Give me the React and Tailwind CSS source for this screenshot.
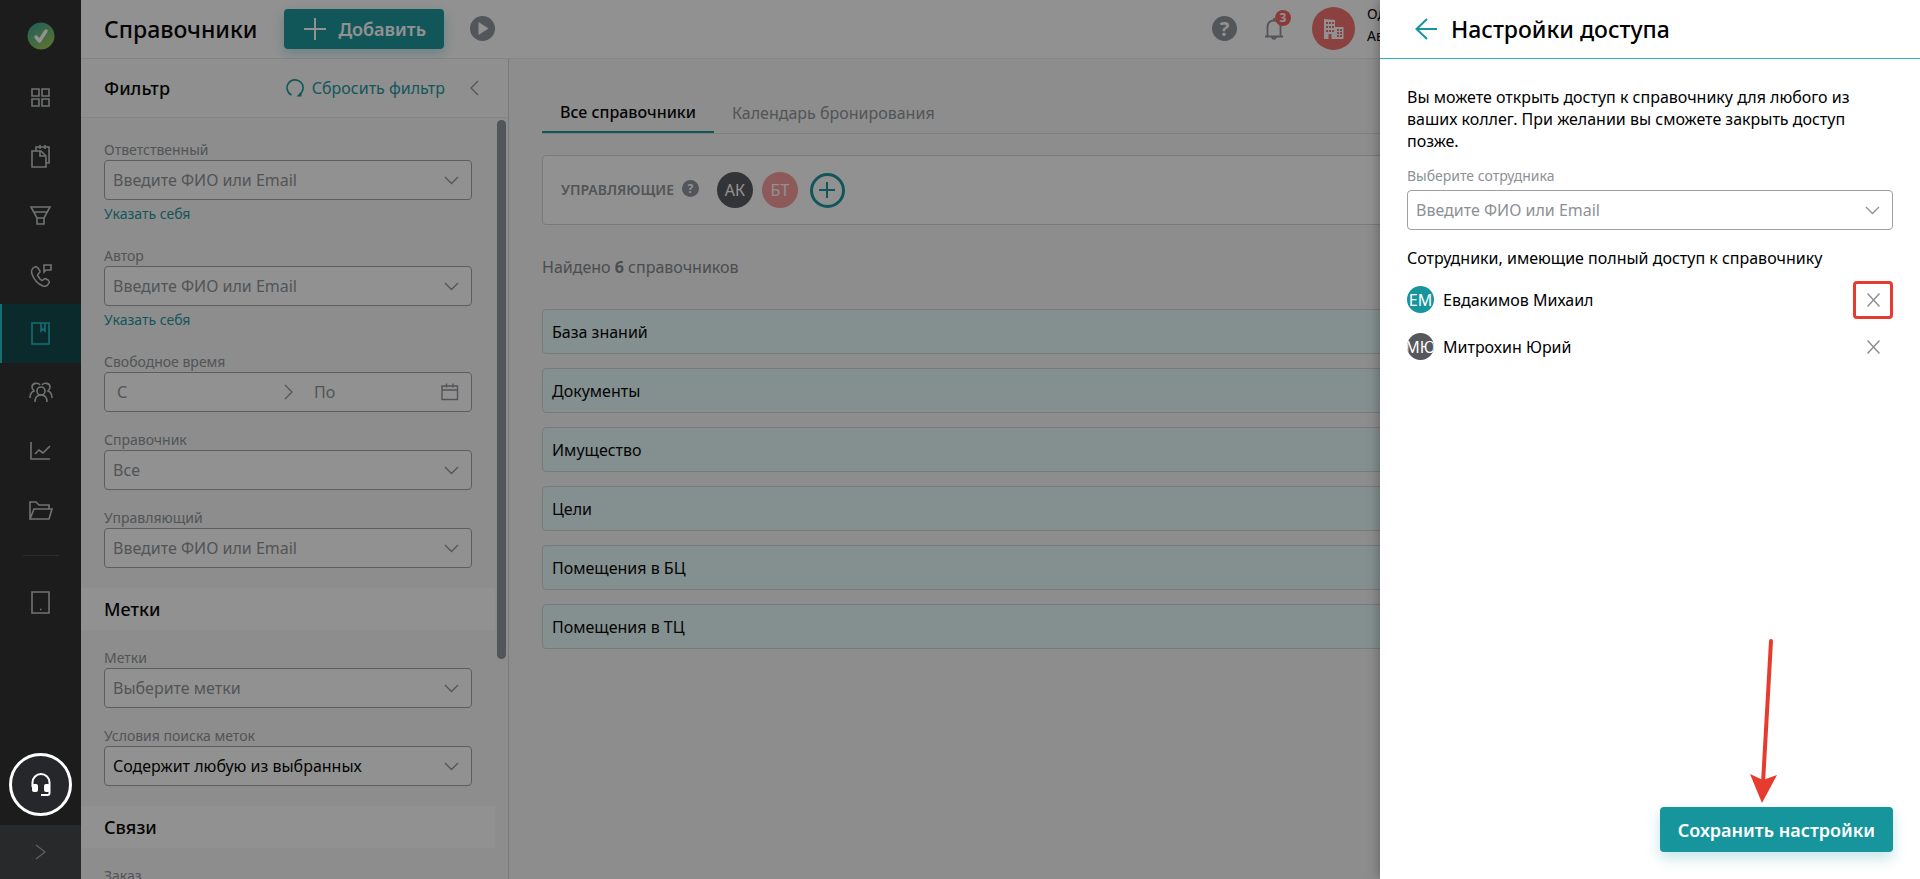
import { useState } from "react";

const navItems = ["grid", "docs", "funnel", "phone", "book", "people", "chart", "folder"];

const directories = [
  "База знаний",
  "Документы",
  "Имущество",
  "Цели",
  "Помещения в БЦ",
  "Помещения в ТЦ",
];

const navPaths = {
  grid: <path d="M3 3h7v7H3zM13 3h7v7h-7zM3 13h7v7H3zM13 13h7v7h-7z" />,
  docs: (
    <>
      <path d="M3 6h9l5 5v11H3z" />
      <path d="M11 6v5h5" />
      <path d="M7 6V2h13v16h-3M11 0v4M16 0v4" />
    </>
  ),
  funnel: <path d="M2 3h19l-6 11H8zM5 8h13M8 14h7v6H8z" />,
  phone: (
    <>
      <path d="M6 4c-3 1-4 4-3 7 2 6 6 10 11 12 3 1 5-1 6-3 1-1 0-2-1-3l-2-1c-1-1-2 0-3 1s-2 0-3-1l-2-3c-1-1 0-2 1-3 1 0 1-1 1-2L9 5c-1-1-2-2-3-1z" />
      <path d="M15 9V2h7v5h-5z" />
    </>
  ),
  book: <path d="M3 1h17v21H3zM12 1v8l2-2 2 2V1" />,
  people: (
    <>
      <circle cx="12" cy="10" r="4" />
      <path d="M6 21c0-4 2-7 6-7s6 3 6 7" />
      <path d="M11 4C9 1 3 2 3 6c0 2 1 3 2 4-3 1-4 4-4 7M13 4c2-3 8-2 8 2 0 2-1 3-2 4 3 1 4 4 4 7" />
    </>
  ),
  chart: <path d="M2 2v17h19M6 14l4-4 4 3 7-7" />,
  folder: <path d="M1 20V3h6l3 3h10v4M1 20l4-10h18l-3 10z" />,
  tablet: <path d="M3 1h17v21H3zM11 18.5h1.5" />,
};

const NavIcon = ({ name }) => (
  <svg
    className="w-6 h-6"
    viewBox="0 0 24 24"
    fill="none"
    stroke="currentColor"
    strokeWidth="1.6"
    aria-hidden="true"
  >
    {navPaths[name]}
  </svg>
);

const Chevron = ({ className, d = "M1 1l6.5 6.5L14 1", w = 15, h = 9 }) => (
  <svg
    className={className}
    width={w}
    height={h}
    viewBox={`0 0 ${w} ${h}`}
    fill="none"
    stroke="currentColor"
    strokeWidth="1.3"
    aria-hidden="true"
  >
    <path d={d} />
  </svg>
);

const HelpIcon = ({ className }) => (
  <span
    className={`rounded-full bg-[#8c9299] text-white font-bold flex items-center justify-center shrink-0 ${className}`}
  >
    ?
  </span>
);

const Field = ({ id, label, placeholder, options, muted, link, spaced }) => (
  <div className="flex flex-col items-stretch">
    <label htmlFor={id} className="text-sm leading-5 text-[#8c9196]">
      {label}
    </label>
    <div className={`relative flex ${spaced ? "mt-1" : ""}`}>
      {options ? (
        <select
          id={id}
          className={`appearance-none flex-1 min-w-0 h-10 px-2 text-base bg-white border border-[#a0a0a2] rounded outline-none ${
            muted ? "text-[#8c9196]" : "text-black"
          }`}
        >
          {options.map((o) => (
            <option key={o}>{o}</option>
          ))}
        </select>
      ) : (
        <input
          id={id}
          type="text"
          placeholder={placeholder}
          className="flex-1 min-w-0 h-10 px-2 text-base bg-white border border-[#a0a0a2] rounded outline-none placeholder:text-[#8c9196]"
        />
      )}
      <Chevron className="absolute right-[13px] top-4 pointer-events-none text-[#8c9196]" />
    </div>
    {link && (
      <a href="#self" className="text-sm leading-7 text-[#17959c]">
        {link}
      </a>
    )}
  </div>
);

const Sidebar = () => (
  <nav className="w-[81px] shrink-0 bg-[#282a28] flex flex-col items-stretch text-[#c4c6c8]">
    <a href="#home" aria-label="Главная" className="h-[68px] pt-1 flex justify-center items-center">
      <svg width="28" height="28" viewBox="0 0 28 28" aria-hidden="true">
        <defs>
          <linearGradient id="logo" x1="0.2" y1="0" x2="0.8" y2="1">
            <stop offset="0" stopColor="#34a69a" />
            <stop offset="1" stopColor="#a4c84c" />
          </linearGradient>
        </defs>
        <circle cx="14" cy="14" r="13.5" fill="url(#logo)" />
        <path
          d="M9 15l3.500 4L19 9"
          fill="none"
          stroke="#fff"
          strokeWidth="3.5"
          strokeLinecap="round"
          strokeLinejoin="round"
        />
      </svg>
    </a>
    {navItems.map((name) => (
      <a
        key={name}
        href={`#${name}`}
        aria-label={name}
        className={`h-[59px] flex items-center justify-center ${
          name === "book"
            ? "bg-[#0a4446] text-[#1fc0c8] border-l-2 border-[#1fc0c8] pr-[2px]"
            : ""
        }`}
      >
        <NavIcon name={name} />
      </a>
    ))}
    <hr className="w-9 mt-[15px] mx-auto border-[#474949]" />
    <a
      href="#tablet"
      aria-label="tablet"
      className="h-[59px] mt-[17px] flex items-center justify-center"
    >
      <NavIcon name="tablet" />
    </a>
    <button
      type="button"
      aria-label="Развернуть меню"
      className="h-[54px] mt-auto bg-[#414346] text-[#a0a4a8] flex items-center justify-center"
    >
      <Chevron d="M1 1l9 7-9 7" w={11} h={16} />
    </button>
  </nav>
);

const Header = () => (
  <header className="h-[59px] shrink-0 bg-white border-b border-[#e6e8e8] flex items-center pl-[23px] pb-px">
    <h1 className="text-[23px] font-medium leading-8">Справочники</h1>
    <button
      type="button"
      className="ml-[27px] h-10 pl-5 pr-[18px] flex items-center gap-3 rounded bg-[#17959c] text-white text-lg font-semibold shadow-[0_4px_12px_rgba(23,149,156,0.3)]"
    >
      <svg width="22" height="22" viewBox="0 0 22 22" stroke="#fff" strokeWidth="2" aria-hidden="true">
        <path d="M11 0v22M0 11h22" />
      </svg>
      Добавить
    </button>
    <button type="button" aria-label="Видео" className="ml-[26px]">
      <svg width="25" height="25" viewBox="0 0 25 25" aria-hidden="true">
        <circle cx="12.5" cy="12.5" r="12.5" fill="#8c9299" />
        <path d="M8.500 6v13l10-6.500z" fill="#fff" />
      </svg>
    </button>
    <div className="ml-auto flex items-center">
      <HelpIcon className="w-[25px] h-[25px] text-xl" />
      <button type="button" aria-label="Уведомления" className="relative ml-7 text-[#8c9196]">
        <svg
          width="18"
          height="22"
          viewBox="0 0 18 22"
          fill="none"
          stroke="currentColor"
          strokeWidth="1.8"
          aria-hidden="true"
        >
          <path d="M0 18.500h18M2.500 18.500V9c0-4 2.500-6.500 6.500-6.500s6.500 2.500 6.500 6.500v9.500M9 0v2.500M7 18.500c0 3 4 3 4 0" />
        </svg>
        <span className="absolute -top-2 left-[10px] w-4 h-4 rounded-full bg-[#f5625f] text-white text-xs font-bold leading-4">
          3
        </span>
      </button>
      <span className="ml-[29px] w-[43px] h-[43px] rounded-full bg-[#f26d6b] flex items-center justify-center">
        <svg width="20" height="20" viewBox="0 0 20 20" aria-hidden="true">
          <path
            fill="#fff"
            fillRule="evenodd"
            d="M0 0l11 1v7h8.500v12H7.500v-5h-3v5H0zM2 3v2h2V3zM5 3v2h2V3zM8 3v2h2V3zM2 7v2h2V7zM5 7v2h2V7zM8 7v2h2V7zM2 11v2h2v-2zM5 11v2h2v-2zM8 11v2h2v-2zM13 10v2h2v-2zM16 10v2h2v-2zM13 13v2h2v-2zM16 13v2h2v-2zM13 16v2h2v-2zM16 16v2h2v-2z"
          />
        </svg>
      </span>
      <div className="w-[553px] ml-3 pb-2 text-sm leading-[22px]">
        <div>Од</div>
        <div>Ав</div>
      </div>
    </div>
  </header>
);

const SectionTitle = ({ children }) => (
  <h3 className="h-[42px] pl-[23px] flex items-center bg-white text-lg font-medium">{children}</h3>
);

const FilterPanel = () => (
  <aside className="w-[428px] shrink-0 border-r border-[#d4d6d6] flex flex-col min-h-0">
    <div className="h-[59px] shrink-0 border-b border-[#e6e8e8] bg-[#fbfbfb] flex items-center pl-[23px] pr-[29px] pb-px">
      <h2 className="text-lg font-medium">Фильтр</h2>
      <button type="button" className="ml-auto flex items-center gap-2 text-base text-[#17959c]">
        <svg
          width="18"
          height="18"
          viewBox="0 0 18 18"
          fill="none"
          stroke="currentColor"
          strokeWidth="1.6"
          aria-hidden="true"
        >
          <path d="M5.500 16A8 8 0 1 1 13.500 15.500" />
          <path d="M10.500 17.500h5v-5z" fill="currentColor" stroke="none" />
        </svg>
        Сбросить фильтр
      </button>
      <button type="button" aria-label="Свернуть фильтр" className="ml-[25px] text-[#8c9196]">
        <Chevron d="M8 1L1 8l7 7" w={9} h={16} />
      </button>
    </div>

    <div className="flex flex-1 min-h-0">
      <div className="flex-1 min-h-0 overflow-hidden">
        <div className="px-[23px] pt-[22px] pb-5 flex flex-col gap-[18px]">
          <Field id="responsible" label="Ответственный" placeholder="Введите ФИО или Email" link="Указать себя" />
          <Field id="author" label="Автор" placeholder="Введите ФИО или Email" link="Указать себя" />

          {/* Date range */}
          <div>
            <label htmlFor="from" className="block text-sm leading-5 text-[#8c9196]">
              Свободное время
            </label>
            <div className="h-10 flex items-center border border-[#a0a0a2] rounded bg-white text-[#8c9196] px-3">
              <input id="from" placeholder="С" className="w-[167px] outline-none placeholder:text-[#8c9196]" />
              <Chevron d="M1 1l7 7-7 7" w={9} h={16} />
              <input
                aria-label="По"
                placeholder="По"
                className="flex-1 min-w-0 ml-[21px] outline-none placeholder:text-[#8c9196]"
              />
              <svg
                width="18"
                height="18"
                viewBox="0 0 18 18"
                fill="none"
                stroke="currentColor"
                strokeWidth="1.4"
                aria-hidden="true"
              >
                <path d="M1 3h15.500v13.500H1zM1 7h15.500M5.500 0.500v4M12 0.500v4" />
              </svg>
            </div>
          </div>

          <Field id="directory" label="Справочник" options={["Все"]} muted />
          <Field id="manager" label="Управляющий" placeholder="Введите ФИО или Email" />
        </div>

        <SectionTitle>Метки</SectionTitle>
        <div className="px-[23px] pt-[18px] pb-5 flex flex-col gap-[18px]">
          <Field id="tags" label="Метки" placeholder="Выберите метки" />
          <Field id="tagsMode" label="Условия поиска меток" options={["Содержит любую из выбранных"]} />
        </div>

        <SectionTitle>Связи</SectionTitle>
        <div className="px-[23px] py-[18px]">
          <Field id="order" label="Заказ" />
        </div>
      </div>

      {/* Scroll bar */}
      <div className="w-[13px] shrink-0 pt-0.5 pl-0.5">
        <div className="w-[9px] h-[71%] rounded-full bg-[#8c9299]" />
      </div>
    </div>
  </aside>
);

const Content = () => (
  <main className="flex-1 min-w-0 px-[33px] pt-[34px]">
    <div className="flex border-b border-[#dcdede]">
      <button
        type="button"
        className="h-10 px-[18px] -mb-px border-b-2 border-[#17959c] text-base font-medium"
      >
        Все справочники
      </button>
      <button type="button" className="h-10 px-[18px] text-base text-[#8c9196]">
        Календарь бронирования
      </button>
    </div>

    <div className="mt-[21px] h-[70px] px-[18px] flex items-center bg-white border border-[#d4d6d6] rounded">
      <span className="text-sm font-semibold text-[#8c9196]">УПРАВЛЯЮЩИЕ</span>
      <HelpIcon className="w-[17px] h-[17px] ml-2 mb-[3px] text-xs" />
      <span className="ml-[18px] w-9 h-9 rounded-full bg-[#55575b] text-white flex items-center justify-center">
        АК
      </span>
      <span className="ml-[9px] w-9 h-9 rounded-full bg-[#f79c9a] text-white flex items-center justify-center">
        БТ
      </span>
      <button
        type="button"
        aria-label="Добавить управляющего"
        className="ml-3 w-[35px] h-[35px] rounded-full border-[3px] border-[#17959c] text-[#17959c] flex items-center justify-center"
      >
        <svg width="16" height="16" viewBox="0 0 16 16" stroke="currentColor" strokeWidth="2" aria-hidden="true">
          <path d="M8 0v16M0 8h16" />
        </svg>
      </button>
    </div>

    <p className="mt-[30px] leading-6 text-[#7f8489]">
      Найдено <b className="font-bold">6</b> справочников
    </p>

    <ul className="mt-[30px] flex flex-col gap-[14px]">
      {directories.map((name) => (
        <li key={name} className="h-[45px] px-[9px] flex items-center bg-[#e8fbfb] border border-[#d4d6d6] rounded">
          {name}
        </li>
      ))}
    </ul>
  </main>
);

const Person = ({ initials, name, color, marked, onRemove }) => (
  <li className="h-[47px] flex items-center">
    <span
      className={`w-[27px] h-[27px] rounded-full overflow-hidden flex items-center justify-center shrink-0 text-base text-white ${color}`}
    >
      {initials}
    </span>
    <span className="ml-[9px] flex-1">{name}</span>
    <button
      type="button"
      aria-label={`Закрыть доступ: ${name}`}
      onClick={onRemove}
      className={`w-10 h-[38px] flex items-center justify-center rounded border-[3px] text-[#8c8e90] ${
        marked ? "border-[#e63b2e]" : "border-transparent"
      }`}
    >
      <svg width="13" height="14" viewBox="0 0 13 14" stroke="currentColor" strokeWidth="1.5" aria-hidden="true">
        <path d="M0.500 0.500l12 13M12.500 0.500l-12 13" />
      </svg>
    </button>
  </li>
);

const AccessDrawer = () => {
  const [people, setPeople] = useState([
    { initials: "ЕМ", name: "Евдакимов Михаил", color: "bg-[#17959c]", marked: true },
    { initials: "МЮ", name: "Митрохин Юрий", color: "bg-[#55575b]" },
  ]);

  const removePerson = (name) => {
    setPeople(people.filter((p) => p.name !== name));
  };

  return (
    <section className="absolute top-0 right-0 bottom-0 z-30 w-[540px] bg-white flex flex-col shadow-[0_0_12px_rgba(0,0,0,0.35)]">
      <div className="h-[59px] shrink-0 border-b border-[#1fb8bf] flex items-center pl-[35px] pb-px">
        <button type="button" aria-label="Назад" className="text-[#17959c]">
          <svg
            width="22"
            height="22"
            viewBox="0 0 22 22"
            fill="none"
            stroke="currentColor"
            strokeWidth="2"
            aria-hidden="true"
          >
            <path d="M22 11H1.500M12 1L1.500 11 12 21" />
          </svg>
        </button>
        <h2 className="ml-[14px] text-[23px] font-medium leading-8">Настройки доступа</h2>
      </div>

      <div className="px-[27px] pt-[27px] flex-1">
        <p className="leading-[22px] mb-[14px]">
          Вы можете открыть доступ к справочнику для любого из ваших коллег. При желании вы сможете
          закрыть доступ позже.
        </p>
        <Field id="employee" label="Выберите сотрудника" placeholder="Введите ФИО или Email" spaced />
        <p className="mt-4 leading-6">Сотрудники, имеющие полный доступ к справочнику</p>
        <ul className="mt-[6px]">
          {people.map((p) => (
            <Person key={p.name} {...p} onRemove={() => removePerson(p.name)} />
          ))}
        </ul>
      </div>

      <div className="px-[27px] pb-[27px] flex flex-col items-end">
        {/* Pointer to the save button */}
        <svg width="30" height="166" viewBox="0 0 30 166" className="mr-[115px] mb-[3px]" aria-hidden="true">
          <path d="M23 3l-8 142" stroke="#e63b2e" strokeWidth="4" strokeLinecap="round" />
          <path d="M2 136l13 6 14-5-15 28z" fill="#e63b2e" />
        </svg>
        <button
          type="button"
          className="h-[45px] px-[18px] rounded bg-[#17959c] text-white text-lg font-semibold shadow-[0_6px_14px_rgba(23,149,156,0.25)]"
        >
          Сохранить настройки
        </button>
      </div>
    </section>
  );
};

const App = () => {
  return (
    <div className="relative h-screen overflow-hidden flex bg-[#f7f7f7] text-black text-base font-['Noto_Sans','Open_Sans',sans-serif]">
      <Sidebar />

      <div className="flex-1 min-w-0 flex flex-col">
        <Header />
        <div className="flex flex-1 min-h-0">
          <FilterPanel />
          <Content />
        </div>
      </div>

      {/* Backdrop */}
      <div className="absolute inset-0 z-10 bg-[#0a0c0a]/45" />

      <button
        type="button"
        aria-label="Поддержка"
        className="absolute left-[9px] bottom-[63px] z-20 w-[63px] h-[63px] rounded-full border-[3px] border-white bg-[#26272a] flex items-center justify-center"
      >
        <svg width="20" height="24" viewBox="0 0 20 24" aria-hidden="true">
          <path
            d="M1.500 14V9.500a8.500 8.500 0 0 1 17 0V20q0 2-2 2H10"
            fill="none"
            stroke="#fff"
            strokeWidth="2"
          />
          <rect x="1" y="11" width="6" height="8" rx="2" fill="#fff" />
          <rect x="13" y="11" width="6" height="8" rx="2" fill="#fff" />
        </svg>
      </button>

      <AccessDrawer />
    </div>
  );
};

export default App;
